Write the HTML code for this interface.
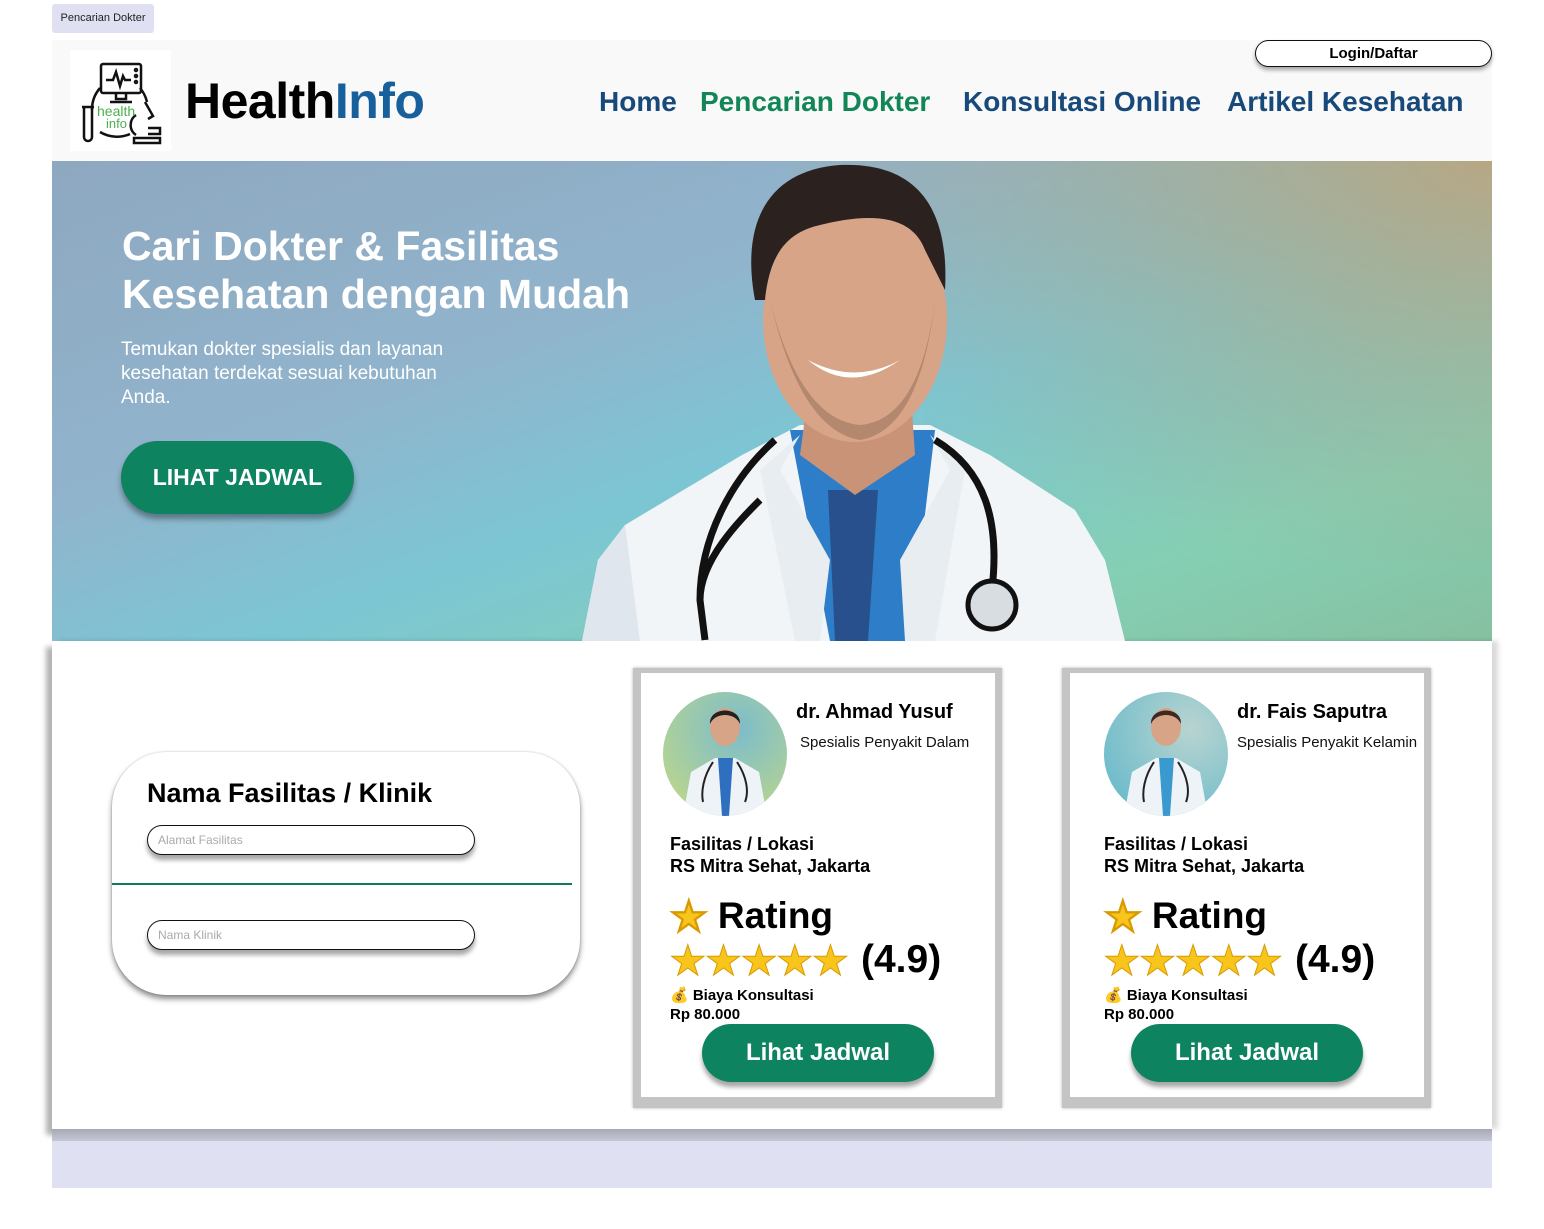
<!DOCTYPE html>
<html><head><meta charset="utf-8"><style>
*{margin:0;padding:0;box-sizing:border-box}
body{width:1544px;height:1229px;background:#fff;font-family:"Liberation Sans",sans-serif;position:relative;overflow:hidden}
.abs{position:absolute}
.tab{left:52px;top:4px;width:102px;height:29px;background:#dfe1f2;border-radius:3px;font-size:11px;color:#222;line-height:29px;text-align:center}
.header{left:52px;top:40px;width:1440px;height:121px;background:#f9f9f9}
.nav{top:86px;font-size:28px;font-weight:bold;color:#17497a;white-space:nowrap}
.login{left:1255px;top:40px;width:237px;height:27px;border:1.5px solid #111;border-radius:14px;background:#fff;font-size:15px;font-weight:bold;text-align:center;line-height:25px;box-shadow:0 3px 4px rgba(0,0,0,.35)}
.hero{left:52px;top:161px;width:1440px;height:480px;overflow:hidden;background:linear-gradient(160deg,#8ea8c0 0%,#90b4cc 35%,#7cc6d4 55%,#85cfb4 80%,#86c0a0 100%)}
.hero:after{content:"";position:absolute;right:0;top:0;width:700px;height:400px;background:radial-gradient(ellipse at 100% 0%,rgba(186,166,128,.95) 0%,rgba(170,170,140,.5) 40%,rgba(160,170,150,0) 75%)}
.h1{left:122px;top:222px;font-size:41px;font-weight:bold;color:#fff;line-height:48px}
.sub{left:121px;top:338px;font-size:19px;color:#fff;line-height:24px}
.btn1{left:121px;top:441px;width:233px;height:73px;background:#0e8360;border-radius:37px;color:#fff;font-weight:bold;font-size:23px;text-align:center;line-height:73px;box-shadow:0 5px 6px rgba(0,0,0,.35)}
.main{left:52px;top:641px;width:1440px;height:488px;background:#fff;box-shadow:-6px 6px 5px rgba(0,0,0,.3),6px 0 5px rgba(0,0,0,.15)}
.band{left:52px;top:1129px;width:1440px;height:59px;background:#dfe1f2}
.bandtop{left:52px;top:1129px;width:1440px;height:12px;background:linear-gradient(#a7a9b6,#c5c7d6)}
.form{left:112px;top:752px;width:468px;height:243px;border-radius:55px;background:#fff;box-shadow:0 4px 6px rgba(0,0,0,.45),0 0 2px rgba(0,0,0,.2)}
.inp{width:328px;height:30px;border:1.5px solid #111;border-radius:15px;font-size:12px;color:#aaa;padding-left:10px;line-height:28px;box-shadow:0 5px 5px rgba(0,0,0,.35);background:#fff}
.card{width:369px;height:440px;background:#c4c4c4;box-shadow:0 0 3px rgba(0,0,0,.3)}
.card .in{position:absolute;left:8px;top:5px;width:354px;height:424px;background:#fff}
.avatar{width:124px;height:124px;border-radius:50%;overflow:hidden}
.name{font-size:20px;font-weight:bold}
.spec{font-size:15px;color:#111}
.fas{font-size:18px;font-weight:bold;line-height:22px}
.rating{font-size:37px;font-weight:bold;white-space:nowrap}
.rating span{color:#f8c51c;font-size:42px;-webkit-text-stroke:1px #d99a00;vertical-align:-3px}
.stars{font-size:42px;color:#f8c51c;letter-spacing:-2px;-webkit-text-stroke:1px #d99a00;white-space:nowrap;line-height:44px}
.score{font-size:39px;font-weight:bold}
.biaya{font-size:15px;font-weight:bold;line-height:19px}
.btn2{width:232px;height:58px;background:#0e8360;border-radius:29px;color:#fff;font-size:24px;font-weight:bold;text-align:center;line-height:58px;box-shadow:0 5px 5px rgba(0,0,0,.35)}
</style></head><body>
<div class="abs tab">Pencarian Dokter</div>
<div class="abs header"></div>
<div class="abs" style="left:70px;top:50px;width:101px;height:101px;background:#fff">
<svg width="101" height="101" viewBox="0 0 101 101" fill="none" stroke="#111" stroke-width="2.5">
<rect x="31" y="14" width="40" height="29" rx="2"/><path d="M36 30h7l3-8 4 14 3-10 2 4h6"/><path d="M46 43v6h10v-6M40 52h22"/><circle cx="66" cy="20" r="1"/><circle cx="66" cy="26" r="1"/><circle cx="66" cy="32" r="1"/>
<path d="M22 60a33 33 0 0 1 8-22M70 38a33 33 0 0 1 7 14M30 82a33 33 0 0 0 30 2"/>
<path d="M12 57h12M14 57v30a4 4 0 0 0 8 0V57"/>
<path d="M75 52l8 14-5 3M66 65a12 12 0 0 0 0 20M64 88h26v5H64zM78 78h12v6H78"/>
<text x="27" y="66" font-size="14" fill="#4caf50" stroke="none" font-family="Liberation Sans">health</text><text x="36" y="78" font-size="13" fill="#4caf50" stroke="none" font-family="Liberation Sans">info</text>
</svg></div>
<div class="abs" style="left:185px;top:72px;font-size:50px;font-weight:bold;color:#000;letter-spacing:-0.5px">Health<span style="color:#17609c">Info</span></div>
<div class="abs login">Login/Daftar</div>
<div class="abs nav" style="left:599px">Home</div>
<div class="abs nav" style="left:700px;color:#128656">Pencarian Dokter</div>
<div class="abs nav" style="left:963px">Konsultasi Online</div>
<div class="abs nav" style="left:1227px">Artikel Kesehatan</div>

<div class="abs hero">
<svg style="position:absolute;left:0;top:0;z-index:1" width="1440" height="480" viewBox="52 161 1440 480">
<path d="M582 641L598 560L625 525L742 455L800 425L930 425L990 455L1075 510L1105 560L1125 641Z" fill="#f2f5f8"/>
<path d="M625 525L598 560L582 641L640 641Z" fill="#dfe6ee"/>
<path d="M790 430L935 430L910 641L830 641Z" fill="#2e7dc8"/>
<path d="M800 435L780 470L830 560L820 641L795 641L760 470Z" fill="#e8edf2"/>
<path d="M930 435L950 470L900 560L905 641L935 641L965 470Z" fill="#e8edf2"/>
<path d="M828 490L878 490L868 641L835 641Z" fill="#27508c"/>
<path d="M810 380L910 380L915 455L855 495L800 455Z" fill="#c99378"/>
<ellipse cx="855" cy="320" rx="92" ry="122" fill="#d8a487"/>
<path d="M755 300C740 220 770 170 840 165C910 162 950 200 945 290L925 250C910 210 860 215 820 225C790 232 770 250 765 300Z" fill="#2b2220"/>
<path d="M808 360Q850 395 900 360Q855 385 808 360Z" fill="#fff"/>
<path d="M770 300Q800 430 860 440Q920 430 935 300Q920 420 860 425Q800 420 770 300Z" fill="#8f6a58" opacity=".5"/>
<path d="M775 440C730 480 700 540 700 600L705 640M700 600C700 560 740 520 760 500" stroke="#111" stroke-width="7" fill="none"/>
<path d="M935 440C985 470 1000 520 992 590" stroke="#111" stroke-width="7" fill="none"/>
<circle cx="992" cy="605" r="24" fill="#d8dde2" stroke="#111" stroke-width="5"/>
</svg>
</div>
<div class="abs h1" style="z-index:2">Cari Dokter &amp; Fasilitas<br>Kesehatan dengan Mudah</div>
<div class="abs sub">Temukan dokter spesialis dan layanan<br>kesehatan terdekat sesuai kebutuhan<br>Anda.</div>
<div class="abs btn1">LIHAT JADWAL</div>

<div class="abs main"></div>
<div class="abs bandtop"></div>
<div class="abs band" style="top:1141px;height:47px"></div>

<div class="abs form">
<div class="abs" style="left:35px;top:26px;font-size:27px;font-weight:bold">Nama Fasilitas / Klinik</div>
<div class="abs inp" style="left:35px;top:73px">Alamat Fasilitas</div>
<div class="abs" style="left:0;top:131px;width:460px;height:2px;background:#117a5c"></div>
<div class="abs inp" style="left:35px;top:168px">Nama Klinik</div>
</div>

<div class="abs card" style="left:633px;top:668px"><div class="in">
<div class="abs avatar" style="left:22px;top:19px;background:radial-gradient(circle at 60% 30%,#7bbccc,#b9d58f 80%)">
<svg width="124" height="124"><path d="M20 124L28 80L52 66L72 66L96 80L104 124Z" fill="#eef3f8"/><path d="M55 66L70 66L66 124L59 124Z" fill="#2f6fc0"/><ellipse cx="62" cy="35" rx="15" ry="19" fill="#d8a487"/><path d="M47 32C46 14 78 14 77 32C72 20 52 20 47 32Z" fill="#222"/><path d="M50 70C40 85 38 100 40 110M74 70C84 85 86 100 82 110" stroke="#222" stroke-width="2" fill="none"/></svg></div>
<div class="abs name" style="left:155px;top:28px">dr. Ahmad Yusuf</div>
<div class="abs spec" style="left:159px;top:61px">Spesialis Penyakit Dalam</div>
<div class="abs fas" style="left:29px;top:160px">Fasilitas / Lokasi<br>RS Mitra Sehat, Jakarta</div>
<div class="abs rating" style="left:29px;top:219px"><span>★</span> Rating</div>
<div class="abs stars" style="left:28px;top:266px">★★★★★</div>
<div class="abs score" style="left:220px;top:265px">(4.9)</div>
<div class="abs biaya" style="left:29px;top:313px">💰 Biaya Konsultasi<br>Rp 80.000</div>
<div class="abs btn2" style="left:61px;top:351px">Lihat Jadwal</div>
</div></div>

<div class="abs card" style="left:1062px;top:668px"><div class="in">
<div class="abs avatar" style="left:34px;top:19px;background:radial-gradient(circle at 70% 30%,#b8d4d0,#6fbccb 80%)">
<svg width="124" height="124"><path d="M20 124L28 80L52 66L72 66L96 80L104 124Z" fill="#eef3f8"/><path d="M55 66L70 66L66 124L59 124Z" fill="#3a9ad0"/><ellipse cx="62" cy="35" rx="15" ry="19" fill="#d8a487"/><path d="M47 32C46 14 78 14 77 32C72 20 52 20 47 32Z" fill="#3a2a22"/><path d="M50 70C40 85 38 100 40 110M74 70C84 85 86 100 82 110" stroke="#222" stroke-width="2" fill="none"/></svg></div>
<div class="abs name" style="left:167px;top:28px">dr. Fais Saputra</div>
<div class="abs spec" style="left:167px;top:61px">Spesialis Penyakit Kelamin</div>
<div class="abs fas" style="left:34px;top:160px">Fasilitas / Lokasi<br>RS Mitra Sehat, Jakarta</div>
<div class="abs rating" style="left:34px;top:219px"><span>★</span> Rating</div>
<div class="abs stars" style="left:33px;top:266px">★★★★★</div>
<div class="abs score" style="left:225px;top:265px">(4.9)</div>
<div class="abs biaya" style="left:34px;top:313px">💰 Biaya Konsultasi<br>Rp 80.000</div>
<div class="abs btn2" style="left:61px;top:351px">Lihat Jadwal</div>
</div></div>
</body></html>
